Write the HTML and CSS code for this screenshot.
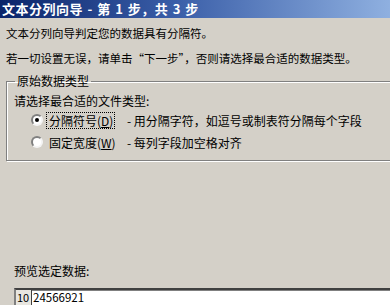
FILE: index.html
```html
<!DOCTYPE html>
<html lang="zh-CN">
<head>
  <meta charset="UTF-8" />
  <title>文本分列向导</title>
  <link rel="stylesheet" href="styles.css">
</head>
<body>

  <div class="titlebar">文本分列向导 - 第 1 步，共 3 步</div>

  <div class="wizard">
    <p class="intro first">文本分列向导判定您的数据具有分隔符。</p>
    <p class="intro">若一切设置无误，请单击“下一步”，否则请选择最合适的数据类型。</p>

    <!-- 原始数据类型 -->
    <fieldset class="group">
      <legend>原始数据类型</legend>
      <div class="group-label">请选择最合适的文件类型:</div>

      <div class="option">
        <span class="radio checked"></span>
        <span class="opt-name focused">分隔符号(<u>D</u>)</span>
        <span class="opt-desc">- 用分隔字符，如逗号或制表符分隔每个字段</span>
      </div>
      <div class="option">
        <span class="radio"></span>
        <span class="opt-name">固定宽度(<u>W</u>)</span>
        <span class="opt-desc">- 每列字段加空格对齐</span>
      </div>
    </fieldset>

    <div class="preview-label">预览选定数据:</div>

    <div class="preview">
      <div class="preview-row">
        <span class="row-num">10</span>
        <span class="row-data">24566921</span>
      </div>
    </div>
  </div>

</body>
</html>
```

FILE: styles.css
```css
body {
  margin: 0;
  background: #d4d0c8;
  font-family: "Noto Sans CJK SC", "Noto Sans", sans-serif;
  font-size: 11.5px;
  color: #000;
  overflow: hidden;
}

.titlebar {
  height: 19px;
  line-height: 19px;
  margin-top: -1px;
  padding-left: 2px;
  color: #fff;
  font-weight: bold;
  font-size: 13px;
  letter-spacing: 0.5px;
  word-spacing: 1px;
  background: linear-gradient(to right, #0a246a 0%, #3a5ea8 45%, #8fb0e0 100%);
  white-space: nowrap;
}

.wizard {
  padding: 0 6px;
}

.intro {
  margin: 9px 0 0;
  line-height: 16px;
  white-space: nowrap;
}

.intro.first {
  margin-top: 7px;
}

.group {
  margin: 7px -12px 0 0;
  padding: 4px 0 7px 7px;
  border: 1px solid #808080;
  box-shadow: inset 1px 1px 0 #fff, 1px 1px 0 #fff;
}

.group legend {
  margin-left: 1px;
  padding: 0 2px;
  line-height: 16px;
  font-size: 12px;
}

.group-label {
  line-height: 16px;
  font-size: 12px;
}

.option {
  display: flex;
  align-items: center;
  height: 22px;
  margin-left: 17px;
  white-space: nowrap;
  font-size: 12px;
}

.option:first-of-type {
  margin-top: 4px;
}

.radio {
  width: 8px;
  height: 8px;
  border-radius: 50%;
  background: #fff;
  border: 2px solid #808080;
  border-right-color: #f4f4f4;
  border-bottom-color: #f4f4f4;
  box-shadow: 0 0 0 0.5px #d4d0c8;
  display: flex;
  align-items: center;
  justify-content: center;
}

.radio.checked::after {
  content: "";
  width: 4px;
  height: 4px;
  border-radius: 50%;
  background: #000;
}

.opt-name {
  margin-left: 3px;
  padding: 0 2px;
  width: 63px;
  line-height: 15px;
  border: 1px dotted transparent;
}

.opt-name.focused {
  border-color: #000;
}

.opt-desc {
  margin-left: 12px;
}

.preview-label {
  margin: 102px 0 0 8px;
  line-height: 16px;
  font-size: 12px;
}

.preview {
  margin: 9px -12px 0 8px;
  height: 15px;
  border-top: 2px solid #404040;
  border-left: 2px solid #808080;
  background: #fff;
  box-shadow: inset 0 1px 0 #808080;
  overflow: hidden;
}

.preview-row {
  display: flex;
  height: 15px;
  line-height: 15px;
}

.row-num {
  width: 14px;
  padding-left: 1px;
  background: #e8e6e0;
  border-right: 1px solid #404040;
  font-size: 11px;
}

.row-data {
  padding-left: 1px;
  font-size: 11.5px;
}
```
